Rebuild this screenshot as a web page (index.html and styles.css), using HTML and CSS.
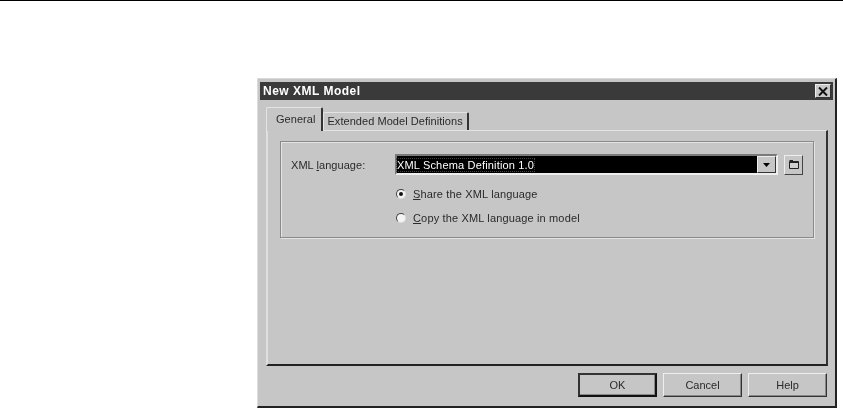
FILE: index.html
```html
<!DOCTYPE html>
<html lang="en">
<head>
    <meta charset="UTF-8">
    <meta name="viewport" content="width=device-width, initial-scale=1.0">
    <title>New XML Model</title>
    <link rel="stylesheet" href="styles.css">
</head>
<body>
    <div class="top-rule"></div>

    <div class="dialog">
        <div class="title-bar">
            <span class="title-text">New XML Model</span>
            <button class="close-btn">
                <svg width="10" height="9" viewBox="0 0 10 9"><path d="M1 0.5 L9 8.5 M9 0.5 L1 8.5" stroke="#111" stroke-width="2" fill="none"/></svg>
            </button>
        </div>

        <div class="tabs">
            <div class="tab active">General</div>
            <div class="tab">Extended Model Definitions</div>
        </div>

        <div class="tab-sheet">
            <div class="group">
                <div class="field-row">
                    <label class="field-label">XML <u>l</u>anguage:</label>
                    <div class="combo">
                        <div class="combo-value"><span class="combo-text">XML Schema Definition 1.0</span></div>
                        <div class="combo-arrow">
                            <svg width="7" height="4" viewBox="0 0 7 4"><path d="M0 0 H7 L3.5 4 Z" fill="#000"/></svg>
                        </div>
                    </div>
                    <button class="browse-btn">
                        <svg width="10" height="9" viewBox="0 0 10 9"><path d="M0.5 1.5 H9.5 V8.5 H0.5 Z" fill="#cfcfcf" stroke="#222"/><path d="M0.5 0.5 H4 M0.5 2.5 H9.5" stroke="#222" fill="none"/></svg>
                    </button>
                </div>
                <div class="radio-row">
                    <span class="radio checked"></span>
                    <span><u>S</u>hare the XML language</span>
                </div>
                <div class="radio-row">
                    <span class="radio"></span>
                    <span><u>C</u>opy the XML language in model</span>
                </div>
            </div>
        </div>

        <div class="button-row">
            <button class="btn default">OK</button>
            <button class="btn">Cancel</button>
            <button class="btn">Help</button>
        </div>
    </div>
</body>
</html>
```

FILE: styles.css
```css
body {
    margin: 0;
    background: #fff;
    font-family: "Liberation Sans", Arial, sans-serif;
    font-size: 11px;
    letter-spacing: 0.05px;
    color: #2a2a2a;
    overflow: hidden;
}

.top-rule {
    height: 1px;
    background: #000;
}

.dialog {
    box-sizing: border-box;
    width: 580px;
    height: 330px;
    margin: 77px 0 0 257px;
    padding: 3px 2px 2px 2px;
    background: #c6c6c6;
    border-top: 1px solid #d8d8d8;
    border-left: 1px solid #dcdcdc;
    border-right: 2px solid #222;
    border-bottom: 2px solid #222;
    filter: blur(0.3px);
}

.title-bar {
    display: flex;
    align-items: center;
    justify-content: space-between;
    height: 18px;
    padding: 0 2px 0 3px;
    background: #3a3a3a;
}

.title-text {
    color: #fff;
    font-weight: bold;
    font-size: 12px;
    letter-spacing: 0.5px;
}

.close-btn {
    display: flex;
    align-items: center;
    justify-content: center;
    width: 16px;
    height: 14px;
    padding: 0;
    background: #c8c8c8;
    border: 1px solid;
    border-color: #eee #333 #333 #eee;
}

.tabs {
    display: flex;
    align-items: flex-end;
    height: 30px;
    padding-left: 6px;
}

.tab {
    box-sizing: border-box;
    height: 18px;
    padding: 2px 4px 0 3px;
    border-top: 1px solid #e4e4e4;
    border-left: 1px solid #e4e4e4;
    border-right: 2px solid #333;
    border-radius: 2px 2px 0 0;
    white-space: nowrap;
}

.tab.active {
    height: 24px;
    padding: 5px 6px 0 9px;
    margin-bottom: -1px;
    background: #c6c6c6;
    position: relative;
    z-index: 1;
}

.tab-sheet {
    box-sizing: border-box;
    width: 562px;
    height: 236px;
    margin-left: 6px;
    padding: 10px 12px 0 12px;
    border-top: 1px solid #e4e4e4;
    border-left: 2px solid #e0e0e0;
    border-right: 2px solid #333;
    border-bottom: 2px solid #222;
}

.group {
    box-sizing: border-box;
    width: 534px;
    height: 97px;
    padding: 12px 10px 0 10px;
    border: 1px solid #8a8a8a;
    box-shadow: 1px 1px 0 #e4e4e4, inset 1px 1px 0 #e4e4e4;
}

.field-row {
    display: flex;
    align-items: center;
    height: 21px;
}

.field-label {
    width: 104px;
}

.combo {
    box-sizing: border-box;
    display: flex;
    width: 383px;
    height: 21px;
    border: 2px solid;
    border-color: #7a7a7a #eee #eee #7a7a7a;
    background: #000;
}

.combo-value {
    flex: 1;
    display: flex;
    align-items: center;
}

.combo-text {
    color: #fff;
    letter-spacing: 0.17px;
    outline: 1px dotted #444;
}

.combo-arrow {
    display: flex;
    align-items: center;
    justify-content: center;
    width: 17px;
    background: #c6c6c6;
    border: 1px solid;
    border-color: #eee #333 #333 #eee;
}

.browse-btn {
    display: flex;
    align-items: center;
    justify-content: center;
    width: 19px;
    height: 20px;
    margin-left: 6px;
    padding: 0;
    background: #c6c6c6;
    border: 1px solid;
    border-color: #eee #444 #444 #eee;
}

.radio-row {
    display: flex;
    align-items: center;
    gap: 7px;
    height: 13px;
    margin: 12px 0 0 105px;
    letter-spacing: 0.15px;
}

.radio-row + .radio-row {
    margin-top: 11px;
}

.radio {
    box-sizing: border-box;
    display: flex;
    align-items: center;
    justify-content: center;
    width: 10px;
    height: 10px;
    background: #f4f4f4;
    border: 1px solid;
    border-color: #444 #ddd #ddd #444;
    border-radius: 50%;
}

.radio.checked::after {
    content: "";
    width: 4px;
    height: 4px;
    background: #111;
    border-radius: 50%;
}

.button-row {
    display: flex;
    justify-content: flex-end;
    gap: 6px;
    margin-top: 7px;
    padding-right: 6px;
}

.btn {
    box-sizing: border-box;
    width: 79px;
    height: 24px;
    padding: 0;
    font: inherit;
    color: #2a2a2a;
    background: #c6c6c6;
    border: 1px solid;
    border-color: #eee #333 #333 #eee;
    box-shadow: inset -1px -1px 0 #888;
}

.btn.default {
    border: 2px solid;
    border-color: #333 #111 #111 #333;
}
```
